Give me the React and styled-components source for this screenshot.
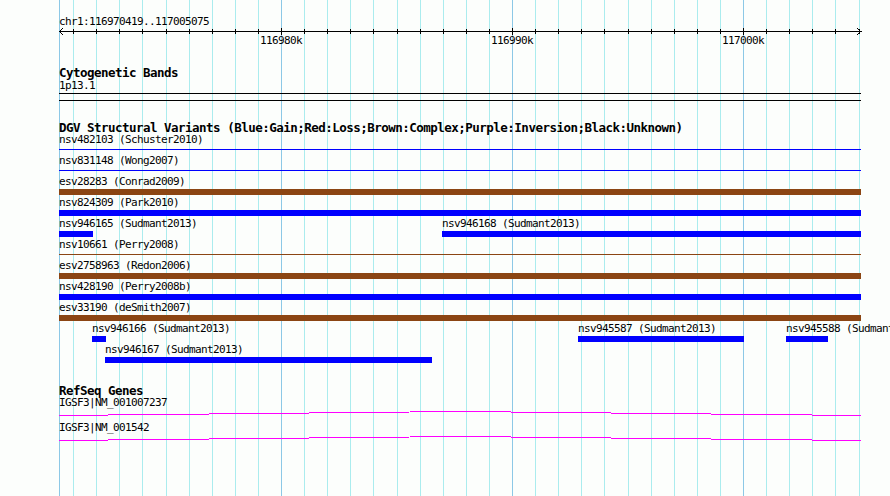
import React from "react";
import styled, { createGlobalStyle } from "styled-components";

const GlobalStyle = createGlobalStyle`
  html, body {
    margin: 0;
    padding: 0;
    background: #fcfefc;
  }
  body {
    font-family: "DejaVu Sans Mono", "Liberation Mono", monospace;
    color: #000;
  }
`;

// genome coordinates -> pixels (116980k sits at x=281, 23.1px per kb)
const ORIGIN = 59;
const PANEL_WIDTH = 802;
const kbToX = (k) => Math.round(281 + (k - 10) * 23.1);
const TICKS = Array.from({ length: 35 }, (_, i) => i + 1);
const MAJOR = [10, 20, 30];

const Panel = styled.div`
  position: relative;
  width: 890px;
  height: 496px;
  overflow: hidden;
`;

const GridLayer = styled.svg`
  position: absolute;
  top: 0;
  left: 0;
  pointer-events: none;
`;

const Ruler = styled.svg`
  position: relative;
  display: block;
`;

const Tracks = styled.div`
  position: relative;
  display: flex;
  flex-direction: column;
  padding-left: ${ORIGIN}px;
`;

const TrackTitle = styled.div`
  font-weight: bold;
  font-size: 12.5px;
  letter-spacing: -0.52px;
  line-height: 12px;
  height: 12px;
  margin-top: ${(p) => p.$gap}px;
  white-space: nowrap;
`;

const BandLabel = styled.div`
  font-size: 11px;
  letter-spacing: -0.62px;
  line-height: 12px;
  height: 12px;
  margin-top: 1px;
`;

const Band = styled.div`
  box-sizing: border-box;
  width: ${PANEL_WIDTH}px;
  height: 8px;
  margin-top: 1px;
  border-top: 1px solid #000;
  border-bottom: 1px solid #000;
`;

const Row = styled.div`
  position: relative;
  height: ${(p) => p.$h}px;
`;

const Feature = styled.div`
  position: absolute;
  top: 0;
  display: flex;
  flex-direction: column;
`;

const FeatureLabel = styled.div`
  font-size: 11px;
  letter-spacing: -0.62px;
  line-height: 12px;
  height: 12px;
  margin-bottom: 1px;
  white-space: nowrap;
`;

const Lane = styled.div`
  height: 6px;
  display: flex;
  flex-direction: column;
`;

const Bar = styled.div`
  height: ${(p) => (p.$thin ? 1 : 6)}px;
  margin-top: ${(p) => (p.$thin ? 2 : 0)}px;
  background: ${(p) => p.$color};
`;

const BLUE = "#0000ff";
const BROWN = "#8b4513";

const FULL = { x: 59, w: 802 };

const dgvRows = [
  [{ ...FULL, label: "nsv482103 (Schuster2010)", color: BLUE, thin: true }],
  [{ ...FULL, label: "nsv831148 (Wong2007)", color: BLUE, thin: true }],
  [{ ...FULL, label: "esv28283 (Conrad2009)", color: BROWN }],
  [{ ...FULL, label: "nsv824309 (Park2010)", color: BLUE }],
  [
    { x: 59, w: 34, label: "nsv946165 (Sudmant2013)", color: BLUE },
    { x: 442, w: 419, label: "nsv946168 (Sudmant2013)", color: BLUE },
  ],
  [{ ...FULL, label: "nsv10661 (Perry2008)", color: BROWN, thin: true }],
  [{ ...FULL, label: "esv2758963 (Redon2006)", color: BROWN }],
  [{ ...FULL, label: "nsv428190 (Perry2008b)", color: BLUE }],
  [{ ...FULL, label: "esv33190 (deSmith2007)", color: BROWN }],
  [
    { x: 92, w: 14, label: "nsv946166 (Sudmant2013)", color: BLUE },
    { x: 578, w: 166, label: "nsv945587 (Sudmant2013)", color: BLUE },
    { x: 786, w: 42, label: "nsv945588 (Sudmant2013)", color: BLUE },
  ],
  [{ x: 105, w: 327, label: "nsv946167 (Sudmant2013)", color: BLUE }],
];

const genes = ["IGSF3|NM_001007237", "IGSF3|NM_001542"];

const svgText = {
  fontSize: 11,
  letterSpacing: -0.62,
  fontFamily: "DejaVu Sans Mono, monospace",
  fill: "#000",
};

const Grid = () => (
  <GridLayer width="890" height="496" shapeRendering="crispEdges">
    <line x1={ORIGIN + 0.5} x2={ORIGIN + 0.5} y1="0" y2="496" stroke="#8cc8e6" />
    {TICKS.map((k) => {
      const x = kbToX(k) + 0.5;
      return (
        <line
          key={k}
          x1={x}
          x2={x}
          y1="0"
          y2="496"
          stroke={MAJOR.includes(k) ? "#8cc8e6" : "#aaecee"}
        />
      );
    })}
  </GridLayer>
);

const Axis = () => (
  <Ruler width="890" height="47" shapeRendering="crispEdges">
    <text x="59" y="25" {...svgText}>
      chr1:116970419..117005075
    </text>
    <line x1="59" x2="862" y1="31.5" y2="31.5" stroke="#000" />
    <polyline points="63,28 59.5,31.5 63,35" fill="none" stroke="#000" shapeRendering="auto" />
    <polyline points="857,28 860.5,31.5 857,35" fill="none" stroke="#000" shapeRendering="auto" />
    {TICKS.map((k) => {
      const x = kbToX(k) + 0.5;
      const major = MAJOR.includes(k);
      return (
        <line key={k} x1={x} x2={x} y1={major ? 28 : 29} y2={major ? 35 : 34} stroke="#000" />
      );
    })}
    {MAJOR.map((k) => (
      <text key={k} x={kbToX(k) - 21} y="44" {...svgText}>
        {116970 + k}k
      </text>
    ))}
  </Ruler>
);

const Hat = () => (
  <svg width={PANEL_WIDTH} height="13" shapeRendering="crispEdges" style={{ display: "block" }}>
    <polyline points="0,5.5 401,1.5 802,5.5" fill="none" stroke="#ff00ff" strokeWidth="1" />
  </svg>
);

const App = () => (
  <Panel>
    <GlobalStyle />
    <Grid />
    <Axis />
    <Tracks>
      <TrackTitle $gap={20}>Cytogenetic Bands</TrackTitle>
      <BandLabel>1p13.1</BandLabel>
      <Band />

      <TrackTitle $gap={21}>
        DGV Structural Variants (Blue:Gain;Red:Loss;Brown:Complex;Purple:Inversion;Black:Unknown)
      </TrackTitle>
      {dgvRows.map((row, i) => (
        <Row key={i} $h={21}>
          {row.map((f) => (
            <Feature key={f.label} style={{ left: f.x - ORIGIN, width: f.w }}>
              <FeatureLabel>{f.label}</FeatureLabel>
              <Lane>
                <Bar $color={f.color} $thin={f.thin} />
              </Lane>
            </Feature>
          ))}
        </Row>
      ))}

      <TrackTitle $gap={20}>RefSeq Genes</TrackTitle>
      {genes.map((g) => (
        <Row key={g} $h={25}>
          <Feature style={{ left: 0, width: PANEL_WIDTH }}>
            <FeatureLabel>{g}</FeatureLabel>
            <Hat />
          </Feature>
        </Row>
      ))}
    </Tracks>
  </Panel>
);

export default App;
